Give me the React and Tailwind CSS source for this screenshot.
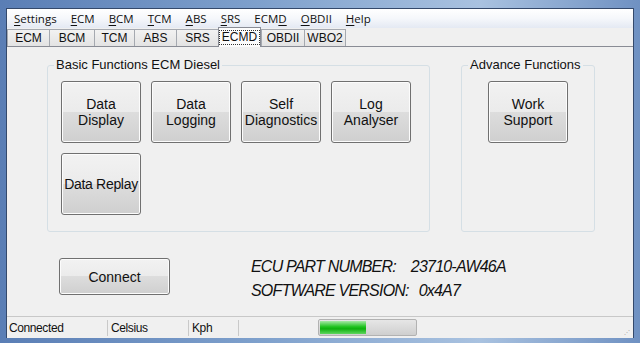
import React from "react";

const menus = [
  ["S", "ettings"],
  ["E", "CM"],
  ["B", "CM"],
  ["T", "CM"],
  ["A", "BS"],
  ["S", "RS"],
  ["ECM", "D", ""],
  ["O", "BDII"],
  ["H", "elp"],
];

const tabs = [
  ["ECM", "w-[42px]"],
  ["BCM", "w-[45px]"],
  ["TCM", "w-[40px]"],
  ["ABS", "w-[42px]"],
  ["SRS", "w-[42px]"],
  ["ECMD", "w-[43px]"],
  ["OBDII", "w-[43px]"],
  ["WBO2", "w-[42px]"],
];

function MenuItem({ item }) {
  if (item.length === 3) {
    return (
      <span>
        {item[0]}
        <span className="underline underline-offset-2">{item[1]}</span>
        {item[2]}
      </span>
    );
  }
  return (
    <span>
      <span className="underline underline-offset-2">{item[0]}</span>
      {item[1]}
    </span>
  );
}

function WinButton({ children, className = "" }) {
  return (
    <button
      className={
        "flex items-center justify-center rounded-[3px] border border-[#707070] bg-[linear-gradient(to_bottom,#f2f2f2_0%,#ebebeb_50%,#dddddd_50%,#cfcfcf_100%)] text-[14px] leading-[16px] text-[#111] shadow-[inset_0_0_0_1px_#fcfcfc] " +
        className
      }
    >
      <span className="text-center">{children}</span>
    </button>
  );
}

function Group({ title, className, children }) {
  return (
    <fieldset
      className={
        "rounded-[3px] border border-[#d5dfe5] " + className
      }
    >
      <legend className="ml-[6px] px-[2px] text-[13px] leading-[16px] text-[#111]">
        {title}
      </legend>
      {children}
    </fieldset>
  );
}

export default function App() {
  return (
    <div className="flex h-[343px] w-[640px] flex-col bg-[linear-gradient(to_right,#5a7eb5,#7ea0cc_40%,#a9c2e0_75%,#6f91c2)] pb-[5px] pl-[6px] pr-[6px] pt-[8px] font-['Liberation_Sans',Arial,sans-serif]">
      <div className="flex flex-1 flex-col border-x border-t border-[#34496b] bg-[#f0f0f0]">
        {/* menu bar */}
        <div className="flex h-[19px] items-center gap-[14px] bg-[linear-gradient(to_bottom,#ffffff,#f5f7fb_50%,#e4e9f3)] pl-[7px] font-['Open_Sans',sans-serif] text-[11.5px] text-[#111]">
          {menus.map((m, i) => (
            <MenuItem key={i} item={m} />
          ))}
        </div>

        {/* tab strip */}
        <div className="flex h-[19px] items-end border-b border-[#898c95] bg-[#f0f0f0]">
          {tabs.map(([t, w]) =>
            t === "ECMD" ? (
              <div
                key={t}
                className={
                  "relative -mb-px flex h-[20px] items-center justify-center border-x border-t border-[#898c95] bg-[#fcfcfc] text-[12px] text-[#111] " +
                  w
                }
              >
                <span className="border border-dotted border-[#333] px-[2px] leading-[13px]">
                  {t}
                </span>
              </div>
            ) : (
              <div
                key={t}
                className={
                  "flex h-[17px] items-center justify-center border-l border-t border-[#a5a9b0] bg-[linear-gradient(to_bottom,#f2f2f2,#e3e3e3)] text-[12px] text-[#111] last:border-r " +
                  w
                }
              >
                {t}
              </div>
            )
          )}
        </div>

        {/* tab page */}
        <div className="flex flex-1 flex-col pl-[40px] pt-[10px]">
          <div className="flex gap-[31px]">
            <Group title="Basic Functions ECM Diesel" className="h-[175px] w-[383px]">
              <div className="ml-[13px] mt-[8px] grid grid-cols-[repeat(4,80px)] gap-[10px]">
                <WinButton className="h-[62px]">
                  Data
                  <br />
                  Display
                </WinButton>
                <WinButton className="h-[62px]">
                  Data
                  <br />
                  Logging
                </WinButton>
                <WinButton className="h-[62px]">
                  Self
                  <br />
                  Diagnostics
                </WinButton>
                <WinButton className="h-[62px]">
                  Log
                  <br />
                  Analyser
                </WinButton>
                <WinButton className="h-[62px] tracking-[-0.3px]">Data Replay</WinButton>
              </div>
            </Group>
            <Group title="Advance Functions" className="h-[175px] w-[134px]">
              <div className="ml-[26px] mt-[8px]">
                <WinButton className="h-[62px] w-[80px]">
                  Work
                  <br />
                  Support
                </WinButton>
              </div>
            </Group>
          </div>

          <div className="mt-[23px] flex items-start gap-[81px] pl-[12px]">
            <WinButton className="mt-[3px] h-[37px] w-[111px]">Connect</WinButton>
            <div className="text-[16px] italic leading-[24px] tracking-[-0.8px] text-[#111]">
              <div>
                ECU PART NUMBER:<span className="inline-block w-[15px]" />23710-AW46A
              </div>
              <div>
                SOFTWARE VERSION:<span className="inline-block w-[10px]" />0x4A7
              </div>
            </div>
          </div>
        </div>

        {/* status bar */}
        <div className="flex h-[22px] items-center border-t border-[#c8c8c8] bg-[#f0f0f0] text-[12px] tracking-[-0.4px] text-[#111]">
          <div className="w-[100px] pl-[2px]">Connected</div>
          <div className="h-[16px] w-px bg-[#c9c9c9]" />
          <div className="w-[80px] pl-[3px]">Celsius</div>
          <div className="h-[16px] w-px bg-[#c9c9c9]" />
          <div className="w-[49px] pl-[3px]">Kph</div>
          <div className="h-[16px] w-px bg-[#c9c9c9]" />
          <div className="ml-[79px] h-[17px] w-[99px] rounded-[2px] border border-[#b2b2b2] bg-[linear-gradient(to_bottom,#e6e6e6,#cfcfcf)] p-px">
            <div className="h-full w-[46px] bg-[linear-gradient(to_bottom,#a6e8a6,#1dc21d_45%,#0eb00e_60%,#5fd65f)]" />
          </div>
          <div className="ml-auto mr-[2px] mt-[8px] text-[6px] leading-[6px] tracking-[1px] text-[#a0a0a0]">
            ⋰
          </div>
        </div>
      </div>
    </div>
  );
}
